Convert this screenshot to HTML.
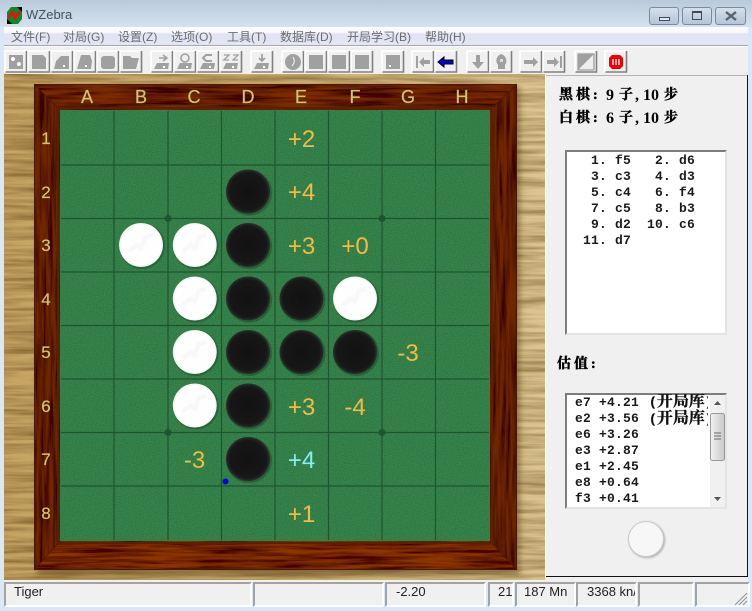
<!DOCTYPE html>
<html><head><meta charset="utf-8"><style>
html,body{margin:0;padding:0;background:#d9e7f6}
#w{position:relative;width:752px;height:611px;overflow:hidden;background:#d9e7f6;font-family:"Liberation Sans","Noto Sans CJK SC",sans-serif}
.a{position:absolute;white-space:pre}
.m{position:absolute;top:29px;font-size:12px;line-height:16px;color:#6b6b6b;white-space:pre}
.s{position:absolute;top:582px;height:21px;border:solid;border-width:2px;border-color:#a3a3a3 #fff #fff #a3a3a3;background:#f0f0f0;font-size:13px;line-height:16px;color:#222;overflow:hidden;white-space:pre}
.b{font:bold 14px "Liberation Serif","Noto Serif CJK SC",serif;color:#000;position:absolute;line-height:18px;white-space:pre;-webkit-text-stroke:.45px #000;letter-spacing:3px}
.d{font:bold 16px "Liberation Serif",serif;color:#000;position:absolute;line-height:18px;white-space:pre}
.l{position:absolute;font:bold 13px/16px "Liberation Mono",monospace;letter-spacing:.2px;color:#1a1a1a;white-space:pre}
.lb{position:absolute;box-sizing:border-box;background:#fff;border:2px solid;border-color:#7d7d7d #e4e4e4 #e4e4e4 #7d7d7d;overflow:hidden}
.wb{position:absolute;top:7px;height:16px;border:1px solid #7a8ba1;border-radius:3px;background:linear-gradient(#d6e0eb,#c4d1e0 50%,#b6c5d6)}
</style></head><body><div id="w">

<div class="a" style="left:0;top:0;width:752px;height:27px;background:linear-gradient(#b9cadb,#d4e2ef)"></div>
<svg class="a" style="left:6px;top:7px" width="17" height="17" viewBox="0 0 17 17"><polygon points="5,0 16,0 16,12 12,17 1,17 1,5" fill="#0a8a2a"/><polygon points="11,0 16,0 16,5" fill="#000"/><polygon points="1,12 6,17 1,17" fill="#000"/><polyline points="2,11 7,5 9,11 14,4" fill="none" stroke="#e81010" stroke-width="2.6"/></svg>
<div class="a" style="left:26px;top:7px;font-size:13px;line-height:16px;color:#44505c">WZebra</div>
<div class="wb" style="left:649px;width:28px"><div class="a" style="left:9px;top:9px;width:9px;height:2px;border:1px solid #3d4a5c;background:#dfe8f2"></div></div>
<div class="wb" style="left:682px;width:28px"><div class="a" style="left:9px;top:3px;width:8px;height:6px;border:1px solid #3d4a5c;border-top-width:2px"></div></div>
<div class="wb" style="left:715px;width:29px"><svg class="a" style="left:9px;top:3px" width="12" height="10"><path d="M1 1L11 9M11 1L1 9" stroke="#55626f" stroke-width="2.4"/></svg></div>

<div class="a" style="left:4px;top:27px;width:744px;height:18px;background:linear-gradient(#fdfeff,#f6f8fd 30%,#dfe3f3 40%,#e3e6f5)"></div>
<div class="a" style="left:4px;top:45px;width:744px;height:1px;background:#a5a5ad"></div>
<div class="a" style="left:4px;top:46px;width:744px;height:1px;background:#fff"></div>
<div class="m" style="left:11px">文件(F)</div><div class="m" style="left:63px">对局(G)</div><div class="m" style="left:118px">设置(Z)</div><div class="m" style="left:171px">选项(O)</div><div class="m" style="left:227px">工具(T)</div><div class="m" style="left:280px">数据库(D)</div><div class="m" style="left:347px">开局学习(B)</div><div class="m" style="left:425px">帮助(H)</div>

<div class="a" style="left:4px;top:47px;width:744px;height:27px;background:#f0f0f0"></div>
<svg class="a" style="left:0;top:47px" width="752" height="28" viewBox="0 47 752 28">
<defs><g id="btn"><rect x="0" y="0" width="22" height="21" fill="#f0f0f0"/><path d="M0 21V0H21" fill="none" stroke="#fff" stroke-width="1.5"/><path d="M0.500 21H21.500V0" fill="none" stroke="#808080" stroke-width="1.6"/></g>
<g id="stack"><polygon points="3,18 6,12 18,12 17,18" fill="#a0a0a0"/><rect x="12" y="15" width="2" height="2" fill="#fff"/></g></defs>
<g fill="#a0a0a0">
<g transform="translate(5,51)"><use href="#btn"/><rect x="4" y="4" width="14" height="14"/><circle cx="8" cy="8" r="2" fill="#fff"/><circle cx="14" cy="13" r="2" fill="#fff"/></g>
<g transform="translate(28,51)"><use href="#btn"/><polygon points="4,4 15,4 18,7 18,18 4,18"/></g>
<g transform="translate(51,51)"><use href="#btn"/><polygon points="3,18 5,10 10,5 18,5 18,18"/><rect x="12" y="14" width="2" height="2" fill="#fff"/></g>
<g transform="translate(74,51)"><use href="#btn"/><polygon points="3,18 7,4 16,4 18,10 17,18"/><rect x="11" y="14" width="2" height="2" fill="#fff"/></g>
<g transform="translate(97,51)"><use href="#btn"/><rect x="4" y="5" width="14" height="13" rx="3"/></g>
<g transform="translate(120,51)"><use href="#btn"/><polygon points="3,5 10,5 12,7 19,7 16,18 3,18"/></g>
<g transform="translate(151,51)"><use href="#btn"/><use href="#stack"/><path d="M8 7H15M12 4L16 7L12 10" fill="none" stroke="#a0a0a0" stroke-width="1.6"/></g>
<g transform="translate(174,51)"><use href="#btn"/><use href="#stack"/><circle cx="11" cy="7" r="4" fill="none" stroke="#a0a0a0" stroke-width="1.6"/></g>
<g transform="translate(197,51)"><use href="#btn"/><use href="#stack"/><path d="M15 4H9L6 7L9 10H15" fill="none" stroke="#a0a0a0" stroke-width="2"/></g>
<g transform="translate(220,51)"><use href="#btn"/><use href="#stack"/><path d="M4 4H9L4 9H9M13 4H18L13 9H18" fill="none" stroke="#a0a0a0" stroke-width="1.3"/></g>
<g transform="translate(251,51)"><use href="#btn"/><use href="#stack"/><path d="M11 3V10M8 7L11 10L14 7" fill="none" stroke="#a0a0a0" stroke-width="1.8"/></g>
<g transform="translate(282,51)"><use href="#btn"/><circle cx="11" cy="11" r="8"/><path d="M11 6Q14 11 10 15" fill="none" stroke="#eee" stroke-width="1"/></g>
<g transform="translate(305,51)"><use href="#btn"/><rect x="4" y="4" width="14" height="14"/></g>
<g transform="translate(328,51)"><use href="#btn"/><rect x="4" y="4" width="14" height="14"/></g>
<g transform="translate(351,51)"><use href="#btn"/><rect x="4" y="4" width="14" height="14"/></g>
<g transform="translate(382,51)"><use href="#btn"/><polygon points="4,4 18,4 18,18 4,18"/><rect x="7" y="14" width="2" height="2" fill="#fff"/></g>
<g transform="translate(412,51)"><use href="#btn"/><rect x="4" y="5" width="2" height="12"/><polygon points="7,11 12,6 12,9 18,9 18,13 12,13 12,16"/></g>
<g transform="translate(435,51)"><use href="#btn"/><polygon points="3,11 9,6 9,9 18,9 18,13 9,13 9,16" fill="#0000d8" stroke="#000" stroke-width="1"/></g>
<g transform="translate(467,51)"><use href="#btn"/><polygon points="11,18 5,11 9,11 9,4 13,4 13,11 17,11"/></g>
<g transform="translate(490,51)"><use href="#btn"/><path d="M11 3A7 7 0 0 1 15 14V18H8V14A7 7 0 0 1 11 3Z"/><rect x="10" y="8" width="3" height="3" fill="#ddd"/></g>
<g transform="translate(520,51)"><use href="#btn"/><polygon points="18,11 13,6 13,9 4,9 4,13 13,13 13,16"/></g>
<g transform="translate(543,51)"><use href="#btn"/><rect x="17" y="5" width="2" height="12"/><polygon points="16,11 11,6 11,9 4,9 4,13 11,13 11,16"/></g>
<g transform="translate(575,51)"><use href="#btn"/><rect x="3" y="3" width="16" height="16" fill="#eee" stroke="#888"/><polygon points="3,3 19,3 3,19"/></g>
<g transform="translate(605,51)"><use href="#btn"/><polygon points="7,4 15,4 18,7 18,15 15,18 7,18 4,15 4,7" fill="#f00000"/><path d="M8 8V14M11 8V14M14 8V14" stroke="#fff" stroke-width="1.3"/></g>
</g></svg>

<svg class="a" style="left:4px;top:74px" width="541" height="506" viewBox="4 74 541 506">
<defs>
<filter id="lw" x="0" y="0" width="100%" height="100%"><feTurbulence type="fractalNoise" baseFrequency="0.012 0.22" numOctaves="4" seed="5"/><feColorMatrix type="matrix" values="0 0 0 0 0.30 0 0 0 0 0.22 0 0 0 0 0.05 1.4 0 0 0 -0.42"/><feComposite in2="SourceGraphic" operator="in"/><feBlend in2="SourceGraphic" mode="multiply"/></filter>
<filter id="fh" x="0" y="0" width="100%" height="100%"><feTurbulence type="fractalNoise" baseFrequency="0.015 0.3" numOctaves="4" seed="9"/><feColorMatrix type="matrix" values="0 0 0 0 0.24 0 0 0 0 0.03 0 0 0 0 0 2.4 0 0 0 -0.7"/><feComposite in2="SourceGraphic" operator="in"/><feBlend in2="SourceGraphic" mode="multiply"/></filter>
<filter id="fv" x="0" y="0" width="100%" height="100%"><feTurbulence type="fractalNoise" baseFrequency="0.3 0.015" numOctaves="4" seed="3"/><feColorMatrix type="matrix" values="0 0 0 0 0.24 0 0 0 0 0.03 0 0 0 0 0 2.2 0 0 0 -0.65"/><feComposite in2="SourceGraphic" operator="in"/><feBlend in2="SourceGraphic" mode="multiply"/></filter>
<filter id="gn" x="0" y="0" width="100%" height="100%"><feTurbulence type="fractalNoise" baseFrequency="0.9" numOctaves="2" seed="2"/><feColorMatrix type="matrix" values="0 0 0 0 0.05 0 0 0 0 0.25 0 0 0 0 0.1 0.9 0 0 0 -0.3"/><feComposite in2="SourceGraphic" operator="in"/><feBlend in2="SourceGraphic" mode="multiply"/></filter>
<filter id="sh" x="-10%" y="-10%" width="120%" height="120%"><feGaussianBlur stdDeviation="3"/></filter>
<linearGradient id="wg" x1="0" y1="0" x2="1" y2="0"><stop offset="0" stop-color="#c6a564"/><stop offset=".5" stop-color="#c9aa6c"/><stop offset="1" stop-color="#dcc490"/></linearGradient>
<radialGradient id="bk" cx=".5" cy=".5" r=".5"><stop offset="0" stop-color="#121212"/><stop offset=".85" stop-color="#171717"/><stop offset="1" stop-color="#2b2f2b"/></radialGradient>
<radialGradient id="wh" cx=".5" cy=".5" r=".5"><stop offset="0" stop-color="#fdfdfd"/><stop offset=".9" stop-color="#fefefe"/><stop offset="1" stop-color="#f0f0f0"/></radialGradient>
<g id="B"><circle r="23" cx="1" cy="1" fill="#0d3018" opacity=".35"/><circle r="22" fill="url(#bk)"/></g>
<g id="W"><circle r="23" cx="1" cy="1" fill="#0d3018" opacity=".3"/><circle r="22" fill="url(#wh)"/><path d="M-12 6L-4 0L0 3L4 -8L12 -10" fill="none" stroke="#f8f8f8" stroke-width="4"/></g>
</defs>
<rect x="4" y="74" width="541" height="506" fill="url(#wg)" filter="url(#lw)"/>
<rect x="37" y="87" width="483" height="488" fill="#4a3210" opacity=".45" filter="url(#sh)"/>
<polygon points="34,84 517,84 489,111 61,111" fill="#7c2c06" filter="url(#fh)"/>
<polygon points="34,570 517,570 489,540 61,540" fill="#8c3406" filter="url(#fh)"/>
<polygon points="34,84 61,111 61,540 34,570" fill="#722804" filter="url(#fv)"/>
<polygon points="517,84 489,111 489,540 517,570" fill="#722804" filter="url(#fv)"/>
<path d="M34 84L61 111M517 84L489 111M34 570L61 540M517 570L489 540" stroke="#3e1404" stroke-width="1" opacity=".6"/>
<rect x="58" y="108" width="434" height="435" fill="none" stroke="#5a2006" stroke-width="2"/>
<rect x="34.500" y="84.500" width="482" height="485" fill="none" stroke="#4a1806"/>
<rect x="60" y="110" width="430" height="431" fill="#357f4b"/>
<rect x="60" y="110" width="430" height="431" fill="#38864e" filter="url(#gn)"/>
<g stroke="#1f5430" stroke-width="1.2" fill="none">
<path d="M114 111V540M168 111V540M221.500 111V540M275 111V540M328.500 111V540M382 111V540M435.500 111V540"/>
<path d="M61 165H489M61 218.500H489M61 272H489M61 325.500H489M61 379H489M61 432.500H489M61 486H489"/>
</g>
<g fill="#1f5430"><circle cx="168" cy="218.500" r="3.500"/><circle cx="382" cy="218.500" r="3.500"/><circle cx="168" cy="432.500" r="3.500"/><circle cx="382" cy="432.500" r="3.500"/></g>

<use href="#B" x="248" y="191.500"/>
<use href="#W" x="141" y="245"/><use href="#W" x="194.750" y="245"/><use href="#B" x="248" y="245"/>
<use href="#W" x="194.750" y="298.500"/><use href="#B" x="248" y="298.500"/><use href="#B" x="301.500" y="298.500"/><use href="#W" x="355" y="298.500"/>
<use href="#W" x="194.750" y="352"/><use href="#B" x="248" y="352"/><use href="#B" x="301.500" y="352"/><use href="#B" x="355" y="352"/>
<use href="#W" x="194.750" y="405.500"/><use href="#B" x="248" y="405.500"/>
<use href="#B" x="248" y="459"/>
<circle cx="225.500" cy="481.500" r="3" fill="#0000f0"/>

<g font-family="Liberation Sans" font-size="18" fill="#cec672" stroke="#cec672" stroke-width=".2" text-anchor="middle">
<text x="87" y="103">A</text><text x="141" y="103">B</text><text x="194" y="103">C</text><text x="248" y="103">D</text><text x="301" y="103">E</text><text x="355" y="103">F</text><text x="408" y="103">G</text><text x="462" y="103">H</text>
<g font-size="17"><text x="46" y="144">1</text><text x="46" y="198">2</text><text x="46" y="251">3</text><text x="46" y="305">4</text><text x="46" y="358">5</text><text x="46" y="412">6</text><text x="46" y="465">7</text><text x="46" y="519">8</text></g>
</g>
<g font-family="Liberation Sans" font-size="24" fill="#f4bb44" text-anchor="middle">
<text x="301.500" y="147">+2</text><text x="301.500" y="200">+4</text><text x="301.500" y="254">+3</text><text x="355" y="254">+0</text><text x="408" y="361">-3</text><text x="301.500" y="415">+3</text><text x="355" y="415">-4</text><text x="194.500" y="468">-3</text><text x="301.500" y="468" fill="#86eef2">+4</text><text x="301.500" y="522">+1</text>
</g>
</svg>

<div class="a" style="left:4px;top:580px;width:744px;height:3px;background:#f0f0f0"></div>
<div class="a" style="left:545px;top:74px;width:203px;height:508px;background:#f0f0f0"></div>
<div class="a" style="left:545px;top:75px;width:202px;height:1px;background:#b4b4b4"></div>
<div class="a" style="left:545px;top:75px;width:1px;height:502px;background:#fff"></div>
<div class="a" style="left:546px;top:576px;width:202px;height:1px;background:#111"></div>
<div class="a" style="left:747px;top:75px;width:1px;height:502px;background:#111"></div>

<div class="b" style="left:559px;top:87px">黑棋:</div><div class="d" style="left:606px;top:87px">9</div><div class="b" style="left:619px;top:87px">子</div><div class="d" style="left:635px;top:87px">,</div><div class="d" style="left:643px;top:87px">10</div><div class="b" style="left:664px;top:87px">步</div>
<div class="b" style="left:559px;top:110px">白棋:</div><div class="d" style="left:606px;top:110px">6</div><div class="b" style="left:619px;top:110px">子</div><div class="d" style="left:635px;top:110px">,</div><div class="d" style="left:643px;top:110px">10</div><div class="b" style="left:664px;top:110px">步</div>

<div class="lb" style="left:565px;top:150px;width:162px;height:185px"></div>
<div class="l" style="left:575px;top:153px">  1. f5   2. d6
  3. c3   4. d3
  5. c4   6. f4
  7. c5   8. b3
  9. d2  10. c6
 11. d7</div>

<div class="b" style="left:557px;top:356px">估值:</div>

<div class="lb" style="left:565px;top:393px;width:162px;height:116px"></div>
<div class="l" style="left:575px;top:395px">e7 +4.21
e2 +3.56
e6 +3.26
e3 +2.87
e1 +2.45
e8 +0.64
f3 +0.41</div>
<div class="a" style="left:649px;top:394px;width:59px;height:34px;overflow:hidden;font:bold 16px/16px 'Liberation Mono','Noto Serif CJK SC',monospace;color:#111;-webkit-text-stroke:.3px #111"><div style="white-space:pre;letter-spacing:0"><span style="font-size:13px">(</span>开局库<span style="font-size:13px">)</span>
<span style="font-size:13px">(</span>开局库<span style="font-size:13px">)</span></div></div>
<div class="a" style="left:710px;top:395px;width:15px;height:112px;background:#f0f0f0"></div>
<svg class="a" style="left:710px;top:395px" width="15" height="112"><defs><linearGradient id="sbg"><stop offset="0" stop-color="#f2f2f2"/><stop offset="1" stop-color="#c8c8c8"/></linearGradient></defs><path d="M4 10L7.500 6L11 10Z" fill="#555"/><path d="M4 102L7.500 106L11 102Z" fill="#555"/><rect x="0.500" y="18.500" width="14" height="47" rx="2" fill="url(#sbg)" stroke="#9a9a9a"/><path d="M4 38H11M4 41H11M4 44H11" stroke="#666"/></svg>

<div class="a" style="left:628px;top:521px;width:34px;height:34px;border-radius:50%;border:1px solid #c9c9c9;background:#f7f7f7;box-shadow:1px 1px 2px #aaa"></div>

<div class="s" style="left:4px;width:244px"><span style="margin-left:8px">Tiger</span></div>
<div class="s" style="left:253px;width:127px"></div>
<div class="s" style="left:385px;width:97px"><span style="margin-left:9px">-2.20</span></div>
<div class="s" style="left:488px;width:22px"><span style="margin-left:8px">21</span></div>
<div class="s" style="left:515px;width:57px"><span style="margin-left:7px">187 Mn</span></div>
<div class="s" style="left:576px;width:57px"><span style="margin-left:9px">3368 kn/s</span></div>
<div class="s" style="left:638px;width:52px"></div>
<div class="s" style="left:695px;width:51px"></div>
<svg class="a" style="left:733px;top:591px" width="15" height="15"><path d="M14 2L2 14M14 6L6 14M14 10L10 14" stroke="#9a9a9a" stroke-width="1.2"/></svg>
</div></body></html>
